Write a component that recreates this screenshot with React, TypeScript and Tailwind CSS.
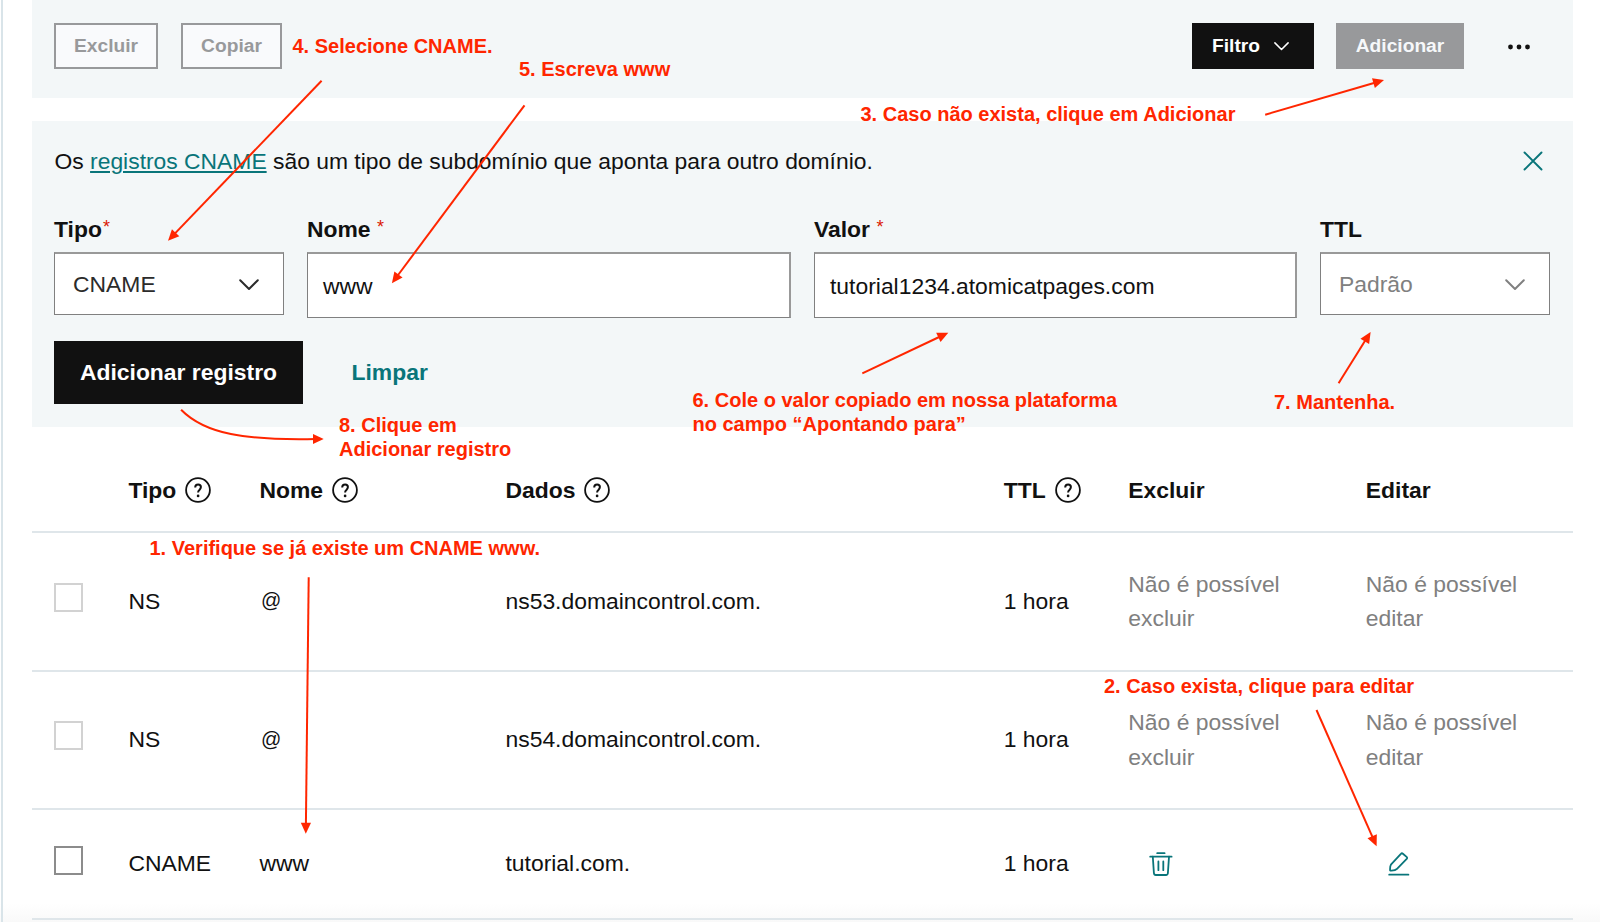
import type { ReactNode } from "react"

interface DnsRecord {
  type: string
  name: string
  data: string
  ttl: string
  locked: boolean
}

const records: DnsRecord[] = [
  { type: "NS", name: "@", data: "ns53.domaincontrol.com.", ttl: "1 hora", locked: true },
  { type: "NS", name: "@", data: "ns54.domaincontrol.com.", ttl: "1 hora", locked: true },
  { type: "CNAME", name: "www", data: "tutorial.com.", ttl: "1 hora", locked: false },
]

const columns = "grid grid-cols-[74.4px_131.1px_246px_498.3px_124.5px_237.5px_1fr] pl-[22px]"

function Chevron({ className }: { className: string }) {
  return (
    <svg viewBox="0 0 20 12" fill="none" stroke="currentColor" strokeWidth="2" strokeLinecap="round" strokeLinejoin="round" className={className}>
      <path d="M1.2 1.2 10 10 18.8 1.2" />
    </svg>
  )
}

function HelpIcon() {
  return (
    <svg viewBox="0 0 26 26" fill="none" stroke="currentColor" strokeWidth="1.8" className="-mt-px ml-[9px] h-[26px] w-[26px] shrink-0">
      <circle cx="13" cy="13" r="11.9" />
      <path d="M10.2 10.4c0-2 1.2-3 2.9-3s2.800 1.100 2.800 2.700c0 1.400-.7 2.100-1.500 2.900-.8.7-1.300 1.300-1.300 2.500" strokeWidth="2" />
      <circle cx="13.100" cy="18.900" r="1.350" fill="currentColor" stroke="none" />
    </svg>
  )
}

function TrashIcon() {
  return (
    <svg viewBox="0 0 24 24" fill="none" stroke="currentColor" strokeWidth="1.8" strokeLinecap="round" strokeLinejoin="round" className="h-6 w-6">
      <path d="M8.200 1.200h7.400M1.200 4.700h21.400" />
      <path d="M3.800 4.700 4.900 21c.1 1.300.7 2 1.900 2h10.200c1.200 0 1.800-.7 1.900-2L20 4.700" />
      <path d="M9.400 9.500v8.700M14.300 9.500v8.700" />
    </svg>
  )
}

function EditIcon() {
  return (
    <svg viewBox="0 0 22 24" fill="none" stroke="currentColor" strokeWidth="1.8" strokeLinecap="round" strokeLinejoin="round" className="h-6 w-[22px]">
      <path d="M1.200 22.700h19.200" />
      <path d="M2.900 12.700 12.900 1.900c.6-.7 1.300-.8 2-.2l3.700 3.200c.7.6.7 1.300.1 2L9 16.800c-.8.9-4 1.900-6.900 1.700-.1-2 .1-4.800.8-5.800z" />
    </svg>
  )
}

function Label({ text, mark }: { text: string; mark?: "tight" | "spaced" }) {
  return (
    <div className="flex h-[34px] text-[22.900px] leading-[34px] font-bold">
      {text}
      {mark && (
        <span className={`-mt-[2px] text-[18px] font-normal text-[#db1802] ${mark === "spaced" ? "ml-[6.500px]" : "ml-px"}`}>*</span>
      )}
    </div>
  )
}

function SelectBox({ value, className }: { value: string; className: string }) {
  return (
    <div className={`mt-[6px] flex h-[63px] items-center justify-between border border-t-2 border-[#808080] border-t-[#999999] bg-white pt-px pr-6 pl-[18px] ${className}`}>
      <span className="text-[22.900px]">{value}</span>
      <Chevron className="mt-px h-3 w-5" />
    </div>
  )
}

function InputBox({ value }: { value: string }) {
  return (
    <div className="mt-[6px] flex h-[66px] items-center border border-t-2 border-r-2 border-[#808080] border-t-[#999999] border-r-[#999999] bg-white pt-[2px] pl-[15px] text-[22.900px]">
      {value}
    </div>
  )
}

function Note({ className, children }: { className: string; children: ReactNode }) {
  return (
    <p className={`absolute text-[20px] leading-[24.400px] font-bold whitespace-nowrap text-[#ff2600] ${className}`}>{children}</p>
  )
}

// start x, start y, tip x, tip y
const arrows = [
  [321.6, 80.7, 168, 240.7],
  [524.5, 105.3, 391.9, 283.3],
  [1265.2, 114.7, 1384, 80],
  [862.3, 373.3, 948.3, 332.7],
  [1338.6, 383.3, 1370.6, 332],
  [308.7, 577.3, 305.8, 833.7],
  [1316.5, 710, 1376.6, 846.3],
]

function Arrows() {
  return (
    <svg viewBox="0 0 1600 922" fill="none" stroke="#ff2600" strokeWidth="2" className="absolute inset-0 h-[922px] w-[1600px]">
      {arrows.map(([x1, y1, x2, y2]) => {
        // the shaft stops inside the head so that the tip stays sharp
        const len = Math.hypot(x2 - x1, y2 - y1)
        const ux = (x2 - x1) / len
        const uy = (y2 - y1) / len
        return (
          <g key={x1}>
            <path d={`M${x1} ${y1}L${x2 - ux * 6} ${y2 - uy * 6}`} />
            <path
              d={`M${x2} ${y2}L${x2 - ux * 11 - uy * 5.1} ${y2 - uy * 11 + ux * 5.1}L${x2 - ux * 11 + uy * 5.1} ${y2 - uy * 11 - ux * 5.1}z`}
              fill="#ff2600"
              stroke="none"
            />
          </g>
        )
      })}
      <path d="M181.100 409.700C205 434 245 440.500 316 439" />
      <path d="M323.700 439 313 433.900V444.100z" fill="#ff2600" stroke="none" />
    </svg>
  )
}

export default function App() {
  return (
    <div className="relative h-[922px] w-[1600px] overflow-hidden bg-white bg-linear-to-b from-white from-98% to-[#f9f9f9] font-['Liberation_Sans',Arial,sans-serif] text-[#111111]">
      <div className="flex h-full pl-px">
        <div className="w-[2px] shrink-0 bg-[#d9e4e9]" />
        <main className="ml-[29px] w-[1541px]">
          <header className="flex h-[98px] items-start justify-between bg-[#f3f7f8] pt-[23px] pr-[42px] pl-[22px]">
            <div className="flex gap-[23px] text-[19.200px] font-bold text-[#98999b]">
              <button className="h-[46px] w-[104px] border-[2.500px] border-[#98999b] bg-[#f9fafc] pt-px">Excluir</button>
              <button className="h-[46px] w-[101px] border-[2.500px] border-[#98999b] bg-[#f9fafc] pt-px">Copiar</button>
            </div>
            <div className="flex items-center text-[19.200px] font-bold">
              <button className="flex h-[46px] w-[122px] items-center bg-[#111111] pt-px pl-5 text-white">
                Filtro
                <Chevron className="ml-[14px] h-[9px] w-[15px]" />
              </button>
              <button className="ml-[22px] h-[46px] w-[128px] bg-[#98999b] pt-px text-[#f6f8fa]">Adicionar</button>
              <svg viewBox="0 0 24 6" className="mt-px ml-[43px] h-[6px] w-6" fill="#111111">
                <circle cx="3.500" cy="3" r="2.400" />
                <circle cx="12" cy="3" r="2.400" />
                <circle cx="20.500" cy="3" r="2.400" />
              </svg>
            </div>
          </header>

          <section className="mt-[23px] h-[306px] bg-[#f3f7f8] px-[22px] pt-[22px]">
            <div className="flex h-[36px] items-center justify-between pr-[8px]">
              <p className="pl-[0.500px] text-[22.870px]">
                Os{" "}
                <a className="text-[#09757a] underline decoration-2 underline-offset-[2px]">registros CNAME</a>{" "}
                são um tipo de subdomínio que aponta para outro domínio.
              </p>
              <svg viewBox="0 0 20 20" fill="none" stroke="#09757a" strokeWidth="1.900" strokeLinecap="round" className="h-5 w-5">
                <path d="m1.500 1.500 17 17m0-17-17 17" />
              </svg>
            </div>
            <div className="mt-[33px] grid grid-cols-[230px_484px_483px_230px] items-start gap-x-[23px]">
              <div>
                <Label text="Tipo" mark="tight" />
                <SelectBox value="CNAME" className="text-[#2b2b2b]" />
              </div>
              <div>
                <Label text="Nome" mark="spaced" />
                <InputBox value="www" />
              </div>
              <div>
                <Label text="Valor" mark="spaced" />
                <InputBox value="tutorial1234.atomicatpages.com" />
              </div>
              <div>
                <Label text="TTL" />
                <SelectBox value="Padrão" className="text-[#808080]" />
              </div>
            </div>
            <div className="mt-[23px] flex items-center text-[22.900px] font-bold">
              <button className="h-[63px] w-[249px] bg-[#111111] pb-px text-white">Adicionar registro</button>
              <button className="ml-[48.500px] pb-px text-[#09757a]">Limpar</button>
            </div>
          </section>

          <section className="text-[22.900px] leading-[34.500px]">
            <div className={`${columns} h-[106px] items-center border-b-2 border-[#dfe6ea] pt-[23px] font-bold`}>
              <span />
              <span className="flex items-center">Tipo<HelpIcon /></span>
              <span className="flex items-center">Nome<HelpIcon /></span>
              <span className="flex items-center">Dados<HelpIcon /></span>
              <span className="flex items-center">TTL<HelpIcon /></span>
              <span>Excluir</span>
              <span>Editar</span>
            </div>
            {records.map((record) => (
              <div
                key={record.data}
                className={`${columns} items-center border-b-2 border-[#dfe6ea] ${record.locked ? "h-[138.500px]" : "h-[110px]"}`}
              >
                <span
                  className={`-mt-[8px] h-[29px] w-[29px] border-2 bg-white ${record.locked ? "border-[#d2d2d2]" : "border-[#8c8c8c]"}`}
                />
                <span className="pb-px">{record.type}</span>
                <span className={record.name === "@" ? "pb-[2px] pl-[1.500px] text-[20px]" : "pb-px"}>{record.name}</span>
                <span className="pb-px">{record.data}</span>
                <span className="pb-px">{record.ttl}</span>
                {record.locked ? (
                  <span className="text-[#808080]">Não é possível<br />excluir</span>
                ) : (
                  <span className="pl-[21px] text-[#09757a]"><TrashIcon /></span>
                )}
                {record.locked ? (
                  <span className="text-[#808080]">Não é possível<br />editar</span>
                ) : (
                  <span className="pl-[22.500px] text-[#09757a]"><EditIcon /></span>
                )}
              </div>
            ))}
          </section>
        </main>
      </div>

      {/* tutorial notes drawn over the page */}
      <Arrows />
      <Note className="top-[536px] left-[149.500px]">1. Verifique se já existe um CNAME www.</Note>
      <Note className="top-[674px] left-[1104px]">2. Caso exista, clique para editar</Note>
      <Note className="top-[102px] left-[860.500px]">3. Caso não exista, clique em Adicionar</Note>
      <Note className="top-[34px] left-[292.500px]">4. Selecione CNAME.</Note>
      <Note className="top-[57px] left-[519px]">5. Escreva www</Note>
      <Note className="top-[388px] left-[692.500px]">
        6. Cole o valor copiado em nossa plataforma
        <br />
        no campo “Apontando para”
      </Note>
      <Note className="top-[390px] left-[1274px]">7. Mantenha.</Note>
      <Note className="top-[413px] left-[339px]">
        8. Clique em
        <br />
        Adicionar registro
      </Note>
    </div>
  )
}
